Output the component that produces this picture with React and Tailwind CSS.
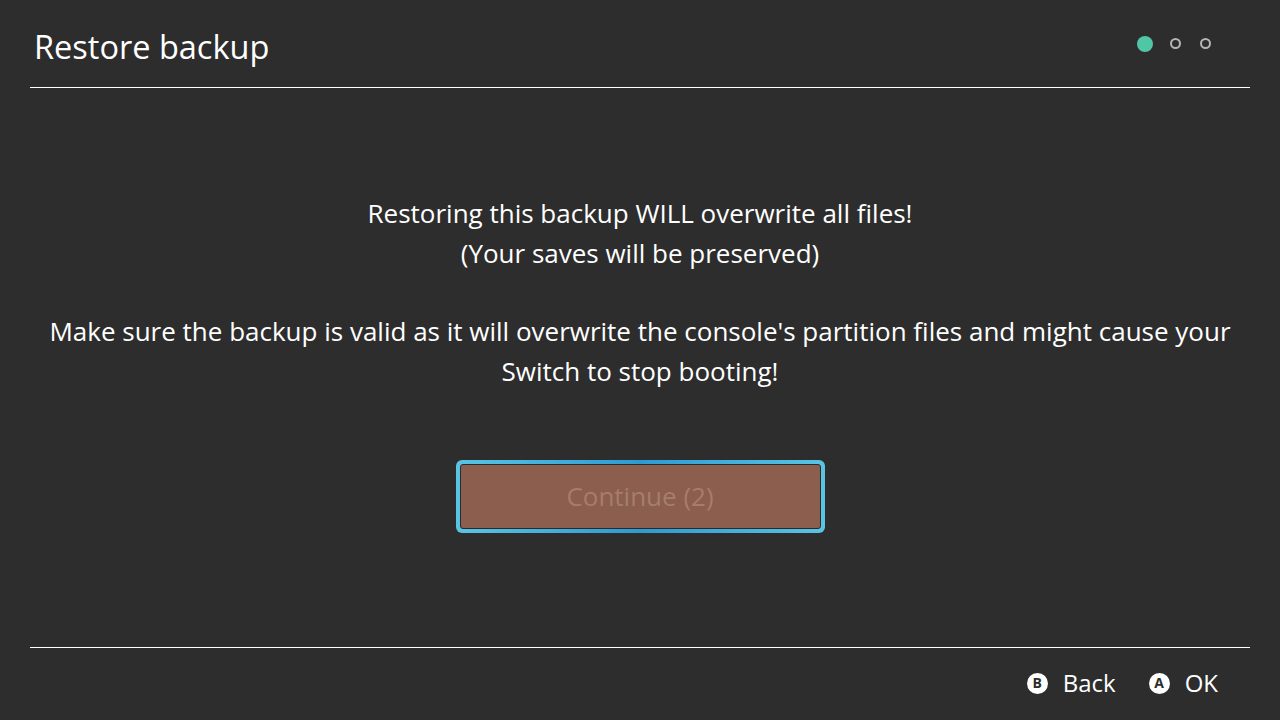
export default function App() {
  return (
    <div
      className="w-[1280px] h-[720px] bg-[#2d2d2d] text-white flex flex-col overflow-hidden"
      style={{ fontFamily: '"Open Sans", "Noto Sans", sans-serif' }}
    >
      {/* Header */}
      <div className="mx-[30px] h-[88px] border-b border-white flex items-center justify-between">
        <h1 className="pl-[4px] pt-[7px] text-[32.5px] font-normal">Restore backup</h1>
        <div className="flex items-center pr-[30px]">
          <span className="w-[30px] flex justify-center">
            <span className="w-[16px] h-[16px] rounded-full bg-[#4fc6a6]" />
          </span>
          <span className="w-[30px] flex justify-center">
            <span className="w-[11px] h-[11px] rounded-full border-2 border-[#b5b5b5]" />
          </span>
          <span className="w-[30px] flex justify-center">
            <span className="w-[11px] h-[11px] rounded-full border-2 border-[#b5b5b5]" />
          </span>
        </div>
      </div>

      {/* Body */}
      <div className="flex-1 flex flex-col items-center text-center text-[26px] leading-[39.5px] pt-[106px]">
        <p>Restoring this backup WILL overwrite all files!</p>
        <p>(Your saves will be preserved)</p>
        <p className="mt-[39px] px-[45px]">
          Make sure the backup is valid as it will overwrite the console's partition files and might cause your
          Switch to stop booting!
        </p>

        <div className="mt-[69px] w-[369px] h-[73px] rounded-[6px] p-[4px] bg-[linear-gradient(90deg,#5ac4e4,#2d9bd2_50%,#5ac4e4)]">
          <div className="w-full h-full rounded-[3px] border border-[#2a2a2a] bg-[#8b5e4e] flex items-center justify-center text-[26px] text-[#a67d6c]">
            Continue (2)
          </div>
        </div>
      </div>

      {/* Footer */}
      <div className="mx-[30px] h-[73px] border-t border-white flex items-center justify-end gap-[33px] pr-[32px] pb-[2px] text-[24px]">
        <div className="flex items-center gap-[15px]">
          <span className="w-[21px] h-[21px] rounded-full bg-white text-[#2d2d2d] text-[14px] font-bold flex items-center justify-center leading-none">B</span>
          <span>Back</span>
        </div>
        <div className="flex items-center gap-[15px]">
          <span className="w-[21px] h-[21px] rounded-full bg-white text-[#2d2d2d] text-[14px] font-bold flex items-center justify-center leading-none">A</span>
          <span>OK</span>
        </div>
      </div>
    </div>
  )
}
